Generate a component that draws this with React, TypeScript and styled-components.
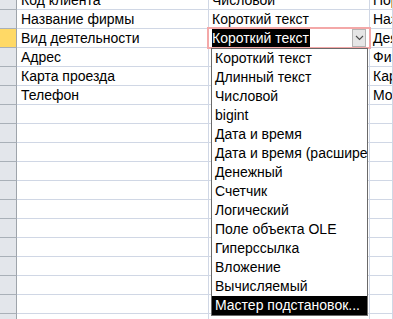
import React from "react";
import styled, { createGlobalStyle } from "styled-components";

const Global = createGlobalStyle`
  html, body { margin: 0; padding: 0; background: #ffffff; overflow: hidden; }
  body { font-family: "Liberation Sans", Arial, sans-serif; }
`;

const Sheet = styled.div`
  width: 393px;
  height: 319px;
  overflow: hidden;
  background: #fff;
`;

const Grid = styled.div`
  display: flex;
  flex-direction: column;
  margin-top: -9px;
`;

const Row = styled.div`
  display: flex;
  height: 19px;
`;

const Selector = styled.div<{ $active?: boolean }>`
  flex: 0 0 16px;
  box-sizing: border-box;
  height: 19px;
  background: ${(p) => (p.$active ? "#ffd966" : "#e3e6eb")};
  border-right: 1px solid #9ea4ab;
  border-bottom: 1px solid #a9b0b8;
  width: 17px;
  flex-basis: 17px;
`;

const Cell = styled.div<{ $w?: number; $pad?: number }>`
  position: relative;
  box-sizing: border-box;
  ${(p) => (p.$w ? `flex: 0 0 ${p.$w}px;` : "flex: 1 1 auto;")}
  height: 19px;
  padding-left: ${(p) => p.$pad ?? 3}px;
  border-right: 1px solid #d0d7e5;
  border-bottom: 1px solid #d0d7e5;
  font-size: 14px;
  line-height: 18px;
  color: #000;
  white-space: nowrap;
  overflow: ${(p) => (p.$w ? "visible" : "hidden")};
`;

const Combo = styled.div`
  position: absolute;
  top: -2px;
  left: -2px;
  right: -2px;
  bottom: -2px;
  border: 2px solid #f4a8a8;
  display: flex;
  align-items: stretch;
  z-index: 2;
`;

const ComboValue = styled.div`
  flex: 1 1 auto;
  padding-left: 3px;
  display: flex;
  align-items: center;
`;

const Selected = styled.span`
  background: #000;
  color: #fff;
  line-height: 18px;
  padding: 0 1px 0 0;
`;

const DropButton = styled.div`
  flex: 0 0 14px;
  box-sizing: border-box;
  margin: 0 3px 0 0;
  background: #e6e6e6;
  border: 1px solid #b4b4b4;
  display: flex;
  align-items: center;
  justify-content: center;
`;

const List = styled.div`
  position: absolute;
  top: 19px;
  left: 2px;
  width: 157px;
  box-sizing: border-box;
  border: 1px solid #6a6a6a;
  background: #fff;
  z-index: 3;
  display: flex;
  flex-direction: column;
  overflow: hidden;
`;

const Item = styled.div<{ $hi?: boolean }>`
  height: 19px;
  line-height: 19px;
  padding-left: 3px;
  font-size: 14px;
  white-space: nowrap;
  overflow: hidden;
  background: ${(p) => (p.$hi ? "#000" : "transparent")};
  color: ${(p) => (p.$hi ? "#fff" : "#000")};
`;

const names = ["Код клиента", "Название фирмы", "Вид деятельности", "Адрес", "Карта проезда", "Телефон"];
const types = ["Числовой", "Короткий текст", "", "", "", ""];
const descs = ["Порядковый номер", "Название фирмы", "Деятельность", "Физический адрес", "Карта проезда", "Мобильный"];

const options = [
  "Короткий текст",
  "Длинный текст",
  "Числовой",
  "bigint",
  "Дата и время",
  "Дата и время (расширенный)",
  "Денежный",
  "Счетчик",
  "Логический",
  "Поле объекта OLE",
  "Гиперссылка",
  "Вложение",
  "Вычисляемый",
  "Мастер подстановок...",
];

const Chevron = () => (
  <svg width="9" height="6" viewBox="0 0 9 6">
    <polyline points="1,1 4.5,4.5 8,1" fill="none" stroke="#4d4d4d" strokeWidth="1.1" />
  </svg>
);

export default function App() {
  const rows = Array.from({ length: 18 }, (_, i) => i);
  return (
    <Sheet>
      <Global />
      <Grid>
        {rows.map((i) => (
          <Row key={i}>
            <Selector $active={i === 2} />
            <Cell $w={192} $pad={4}>{names[i] ?? ""}</Cell>
            <Cell $w={161} $pad={3}>
              {i === 2 ? (
                <Combo>
                  <ComboValue>
                    <Selected>Короткий текст</Selected>
                  </ComboValue>
                  <DropButton>
                    <Chevron />
                  </DropButton>
                  <List>
                    {options.map((o, k) => (
                      <Item key={o} $hi={k === options.length - 1}>
                        {o}
                      </Item>
                    ))}
                  </List>
                </Combo>
              ) : (
                types[i] ?? ""
              )}
            </Cell>
            <Cell $pad={3}>{descs[i] ?? ""}</Cell>
          </Row>
        ))}
      </Grid>
    </Sheet>
  );
}
